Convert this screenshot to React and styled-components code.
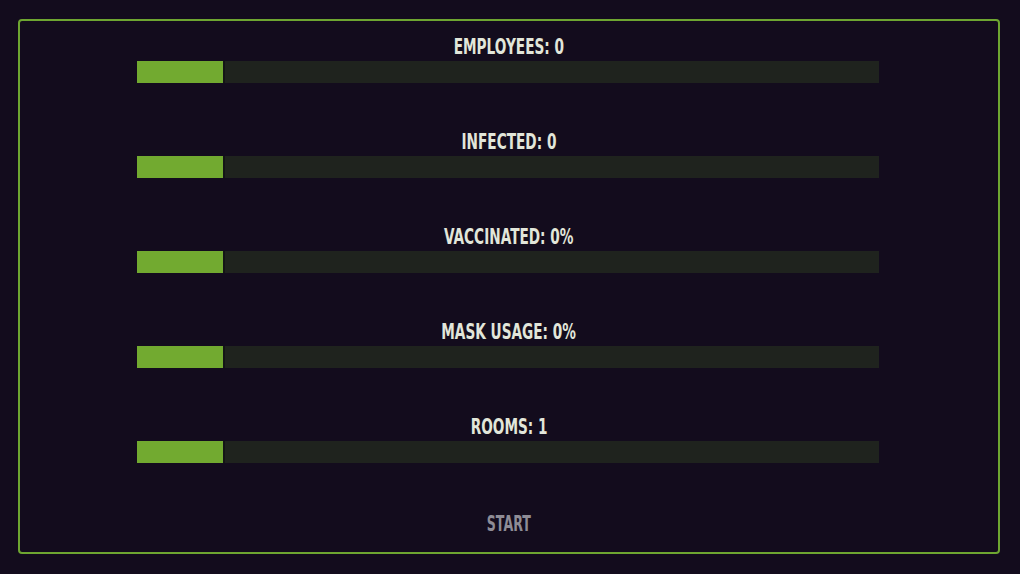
import React from 'react';
import styled, { createGlobalStyle } from 'styled-components';

const GlobalStyle = createGlobalStyle`
    html,
    body {
        margin: 0;
        padding: 0;
        background: #130c1d;
    }
    body {
        width: 1020px;
        height: 574px;
        overflow: hidden;
    }
`;

const Screen = styled('div')`
    box-sizing: border-box;
    height: 574px;
    padding: 19px 20px 20px 18px;
`;

const Frame = styled('div')`
    box-sizing: border-box;
    border: 2px solid #6ea631;
    border-radius: 4px;
    display: flex;
    flex-direction: column;
    height: 100%;
    padding: 14px 119px 17px 117px;
`;

const StatList = styled('div')`
    display: flex;
    flex-direction: column;
    gap: 47px;
`;

const Stat = styled('div')`
    display: flex;
    flex-direction: column;
    gap: 3px;
`;

const Label = styled('div')`
    color: ${(p) => (p.muted ? '#8e8c96' : '#e2e6da')};
    font-family: 'DejaVu Sans', 'Liberation Sans', sans-serif;
    font-size: 21px;
    font-weight: bold;
    line-height: 22px;
    padding-top: 1px;
    text-align: center;

    & > span {
        display: inline-block;
        transform: translateX(1px) scaleX(${(p) => (p.muted ? 0.6 : 0.65)});
        white-space: nowrap;
    }
`;

const Track = styled('div')`
    background: #1f231e;
    display: flex;
    height: 22px;
`;

const Fill = styled('div')`
    background: #72aa30;
    border-right: 2px solid #141517;
    height: 100%;
`;

const StartButton = styled(Label)`
    cursor: pointer;
    margin-top: auto;
`;

const stats = [
    { label: 'EMPLOYEES: 0', fill: 86 },
    { label: 'INFECTED: 0', fill: 86 },
    { label: 'VACCINATED: 0%', fill: 86 },
    { label: 'MASK USAGE: 0%', fill: 86 },
    { label: 'ROOMS: 1', fill: 86 },
];

const App = () => {
    return (
        <>
            <GlobalStyle />
            <Screen>
                <Frame>
                    <StatList>
                        {stats.map((stat) => (
                            <Stat key={stat.label}>
                                <Label>
                                    <span>{stat.label}</span>
                                </Label>
                                <Track>
                                    <Fill style={{ width: stat.fill }} />
                                </Track>
                            </Stat>
                        ))}
                    </StatList>
                    <StartButton muted>
                        <span>START</span>
                    </StartButton>
                </Frame>
            </Screen>
        </>
    );
};
export default App;
